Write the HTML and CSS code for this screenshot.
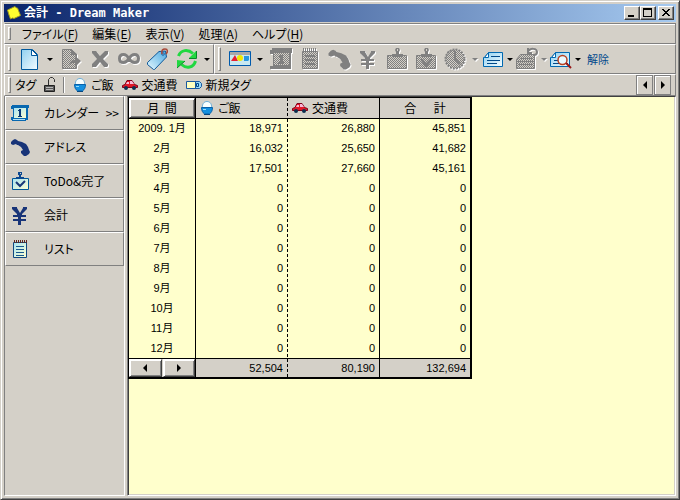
FILE: index.html
```html
<!DOCTYPE html>
<html lang="ja">
<head>
<meta charset="utf-8">
<title>会計 - Dream Maker</title>
<link rel="stylesheet" href="styles.css">
</head>
<body>
<svg class="defs" aria-hidden="true">
  <defs>
    <pattern id="dots" width="2" height="2" patternUnits="userSpaceOnUse">
      <rect width="2" height="2" fill="#d4d0c8"/><rect width="1" height="1" fill="#808080"/><rect x="1" y="1" width="1" height="1" fill="#808080"/>
    </pattern>
    <linearGradient id="sky" x1="0" y1="0" x2="1" y2="1"><stop offset="0" stop-color="#8fd0f0"/><stop offset="1" stop-color="#f4fcff"/></linearGradient>
    <linearGradient id="paper" x1="0" y1="0" x2="1" y2="1"><stop offset="0" stop-color="#a8e4f4"/><stop offset="1" stop-color="#ffffd0"/></linearGradient>
    <linearGradient id="tagfill" x1="1" y1="0" x2="0" y2="1"><stop offset="0" stop-color="#4aa8e0"/><stop offset="1" stop-color="#e4f8ff"/></linearGradient>
    <symbol id="phone" viewBox="0 0 24 24"><path fill="currentColor" d="M3 7l2-2 2-1 2 1 1 1 4 1 4 2 2 3 1 3 1 2-1 2-3 2h-2l-3-3v-2l2-1-2-3-3-2H9L8 9 5 10 3 9z"/></symbol>
    <symbol id="yen" viewBox="0 0 24 24"><path fill="currentColor" d="M4 4h5v1l3 5 3-5V4h4v2l-5 5v1h4v2h-5v2h5v2h-5v4h-3v-4H5v-2h5v-2H5v-2h4v-1L4 6z"/></symbol>
    <symbol id="car" viewBox="0 0 16 16"><path fill="#e01828" stroke="#800018" d="M.5 8.500 3 7.500l2-4h5l2.500 4 3 1v2h-15z"/><path fill="#f8b8d8" d="M5 5h2v2H4zM8 4h2l2 3H8z"/><circle cx="4" cy="11" r="2" fill="#0c3050"/><circle cx="12" cy="11" r="2" fill="#0c3050"/></symbol>
    <symbol id="rice" viewBox="0 0 14 16"><path fill="#f8ffff" stroke="#70b0d8" d="M2.500 7.500C2 4 4 1.500 7 1.500S12 4 11.500 7.500z"/><path fill="#1490e0" stroke="#0860a8" d="M1.500 7.500h11c0 3-1 5-3 6.500h-5c-2-1.500-3-3.500-3-6.500z"/><path fill="#084880" d="M4 14h6v1H4z"/><path fill="#98e0ff" d="M3 9h3v1H3z"/></symbol>
  </defs>
</svg>
<div class="window">
  <header class="titlebar">
    <svg class="logo" viewBox="0 0 16 16" width="16" height="16"><path fill="#ffff30" stroke="#a09820" d="M1.500 5 9 1.500l1.500 1.500h1l3 7.500L8 13.500 6.500 13l-2 1L3 10z"/></svg>
    <h1>会計 - Dream Maker</h1>
    <div class="winbtns">
      <button type="button" aria-label="最小化"><svg viewBox="0 0 12 10" width="12" height="10"><path d="M2 7h6v2H2z"/></svg></button>
      <button type="button" aria-label="最大化"><svg viewBox="0 0 12 10" width="12" height="10"><path fill-rule="evenodd" d="M1 0h9v9H1zM2 2v6h7V2z"/></svg></button>
      <button type="button" class="close" aria-label="閉じる"><svg viewBox="0 0 12 10" width="12" height="10"><path d="M2 1h2v1h1v1h2V2h1V1h2v1H9v1H8v1H7v1h1v1h1v1h1v1H8V7H7V6H5v1H4v1H2V7h1V6h1V5h1V4H4V3H3V2H2z"/></svg></button>
    </div>
  </header>

  <nav class="band menubar">
    <i class="grip"></i>
    <button type="button">ファイル(<u>F</u>)</button>
    <button type="button">編集(<u>E</u>)</button>
    <button type="button">表示(<u>V</u>)</button>
    <button type="button">処理(<u>A</u>)</button>
    <button type="button">ヘルプ(<u>H</u>)</button>
  </nav>

  <div class="bands">
    <div class="band tools first">
      <i class="grip"></i>
      <button type="button" aria-label="新規"><svg class="ic" viewBox="0 0 24 24"><path fill="url(#sky)" stroke="#00589c" d="M3.500 2.500h11l5 5v15h-16z"/><path fill="#fff" stroke="#00589c" d="M13.500 2.500v6h6z"/></svg></button>
      <button type="button" class="drop" aria-label="新規の一覧"></button>
      <button type="button" class="off" disabled aria-label="移動"><svg class="ic" viewBox="0 0 24 24"><path fill="url(#dots)" stroke="#808080" d="M3.500 2.500h9l5 5v14h-14z"/><path fill="#808080" d="M12 2v6h6V7zM10 18c1-4 3-5 6-5V9l6 5-6 6v-4c-3 0-4 0-6 2z"/></svg></button>
      <button type="button" class="off" disabled aria-label="削除"><svg class="ic" viewBox="0 0 24 24"><path fill="#808080" d="M4 4h4l4 5 5-5h3v3l-5 5 5 5v2l-1 1h-3l-4-5-4 5H4v-3l5-5-5-6z"/></svg></button>
      <button type="button" class="off" disabled aria-label="繰り返し"><svg class="ic" viewBox="0 0 24 24"><path fill="none" stroke="#808080" stroke-width="3" d="M12 11.500c-1.500-2.500-3-4-5.500-4s-4 1.500-4 4 1.500 4 4 4 4-1.500 5.500-4 3-4 5.500-4 4 1.500 4 4-1.500 4-4 4-4-1.500-5.500-4z"/></svg></button>
      <button type="button" aria-label="タグ"><svg class="ic" viewBox="0 0 24 24"><path fill="url(#tagfill)" stroke="#105898" d="M1.500 15.500 13 4.500l6.500-.5 1 6L8.500 22.500h-1l-6-5z"/><path fill="#fff" stroke="#105898" d="M16 6h2v2h-2z"/><path fill="none" stroke="#a84838" stroke-width="1.500" d="M16 7c-1-4 1-5 3-5 3 0 3 3 1 5"/></svg></button>
      <button type="button" aria-label="更新"><svg class="ic" viewBox="0 0 24 24"><g fill="none" stroke="#20d840" stroke-width="3"><path d="M3.500 9C6 2.500 13 2 18 6.500"/><path d="M20.500 14c-2 7-9 8-14 3.500"/></g><path fill="#20d840" d="M21 4v7h-7zM2 13v8l8-7z"/><path fill="none" stroke="#088828" d="M21.500 4v7.500H14M2 21l8-7"/></svg></button>
      <button type="button" class="drop" aria-label="更新の一覧"></button>
    </div>
    <div class="band tools second">
      <i class="grip"></i>
      <button type="button" aria-label="画像"><svg class="ic" viewBox="0 0 24 24"><path fill="#c8e8f0" stroke="#005aac" d="M1.500 4.500h21v14h-21z"/><path fill="#a8a8a8" d="M2 5h20v3H2z"/><path fill="#e82030" d="m7 8 3 6H3z"/><circle cx="12" cy="11" r="3" fill="#f0e800"/><path fill="#2898e0" d="M16 9h5v4l-1 1h-4z"/></svg></button>
      <button type="button" class="drop" aria-label="画像の一覧"></button>
      <button type="button" class="off" disabled aria-label="カレンダー"><svg class="ic" viewBox="0 0 24 24"><path fill="#808080" d="M3 1h20v5h-1v16H1v-3h3V7H1V3h2z"/><path fill="url(#dots)" d="M5 6h15v12H5z"/><path fill="#808080" d="M10 8h4v7h1v2H9v-2h2v-5h-1z"/></svg></button>
      <button type="button" class="off" disabled aria-label="リスト"><svg class="ic" viewBox="0 0 24 24"><path fill="url(#dots)" stroke="#808080" d="M4.500 4.500h15v17h-15z"/><path stroke="#808080" stroke-width="2" d="M7 9h10M7 13h10M7 17h10"/><path stroke="#808080" stroke-width="3" stroke-dasharray="1 1" d="M5 2.500h14"/></svg></button>
      <button type="button" class="off" disabled aria-label="アドレス"><svg class="ic big"><use href="#phone"/></svg></button>
      <button type="button" class="off" disabled aria-label="会計"><svg class="ic"><use href="#yen"/></svg></button>
      <button type="button" class="off" disabled aria-label="ToDo"><svg class="ic" viewBox="0 0 24 24"><path fill="url(#dots)" stroke="#808080" d="M2.500 8.500h19v13h-19z"/><path fill="#808080" d="M10 3l1-2h3l1 2-1 2v2h4v3H7V7h4V5z"/><path fill="#d4d0c8" d="M12 2h1v2h-1z"/></svg></button>
      <button type="button" class="off" disabled aria-label="完了"><svg class="ic" viewBox="0 0 24 24"><path fill="url(#dots)" stroke="#808080" d="M2.500 8.500h19v13h-19z"/><path fill="#808080" d="M10 3l1-2h3l1 2-1 2v2h4v3H7V7h4V5zM6 12h3l3 4 4-4h3l-6 8h-2z"/><path fill="#d4d0c8" d="M12 2h1v2h-1z"/></svg></button>
      <button type="button" class="off" disabled aria-label="時刻"><svg class="ic" viewBox="0 0 24 24"><circle cx="12" cy="12" r="9.500" fill="url(#dots)" stroke="#808080" stroke-width="2" stroke-dasharray="2 1"/><path fill="none" stroke="#808080" stroke-width="2" d="M12 4v8l5 5"/></svg></button>
      <button type="button" class="drop off" disabled aria-label="時刻の一覧"></button>
      <button type="button" class="tight" aria-label="表示形式"><svg class="ic" viewBox="0 0 24 24"><path fill="url(#sky)" stroke="#0068b0" d="M7.500 5.500h14v14h-19v-9h1z"/><path fill="#fff" stroke="#0068b0" d="M7.500 5.500v5h-4z"/><path stroke="#004888" d="M10 9.500h9M6 13.500h13M6 16.500h10"/></svg></button>
      <button type="button" class="drop narrow" aria-label="表示形式の一覧"></button>
      <button type="button" class="tight off" disabled aria-label="元に戻す"><svg class="ic" viewBox="0 0 24 24"><path fill="url(#dots)" stroke="#808080" d="M5.500 7.500h14v14h-18v-9z"/><path stroke="#808080" d="M5 11.500h13M3 14.500h15M3 17.500h15"/><path fill="none" stroke="#808080" stroke-width="2" d="M14 4c1-3 8-3 8 1 0 2-1 3-3 3M13 1v5h4"/></svg></button>
      <button type="button" class="drop narrow off" disabled aria-label="元に戻すの一覧"></button>
      <button type="button" class="tight" aria-label="検索"><svg class="ic" viewBox="0 0 24 24"><path fill="url(#sky)" stroke="#0068b0" d="M6.500 5.500h14v14h-19v-9h1z"/><path fill="#fff" stroke="#0068b0" d="M6.500 5.500v5h-4z"/><path stroke="#004888" d="M5 13.500h13M4 16.500h15"/><circle cx="13.500" cy="13" r="4.500" fill="#e8f8ff" stroke="#b84020" stroke-width="1.500"/><path stroke="#981818" stroke-width="2" d="m17 16 5 5"/></svg></button>
      <button type="button" class="drop narrow" aria-label="検索の一覧"></button>
      <button type="button" class="clear">解除</button>
    </div>
  </div>

  <div class="band tagbar">
    <i class="grip"></i>
    <span class="taglabel">タグ</span>
    <button type="button" class="lock" aria-label="ロック"><svg viewBox="0 0 14 18" width="14" height="18"><path fill="none" stroke="#303030" d="M5.500 9V3.500l2-2h2l2 2V6"/><path fill="#585858" stroke="#202020" d="M1.500 9.500h10v6h-10z"/><path stroke="#b8b8b8" d="M3 11.500h7M3 13.500h7"/></svg></button>
    <i class="sep"></i>
    <button type="button" class="tag"><svg width="14" height="16"><use href="#rice"/></svg>ご飯</button>
    <button type="button" class="tag"><svg width="16" height="16"><use href="#car"/></svg>交通費</button>
    <button type="button" class="tag new"><svg viewBox="0 0 16 16" width="16" height="16"><path fill="#ffffc0" stroke="#1858a0" d="M.5 4.500h10v7H.5z"/><path fill="#98d8f8" stroke="#1858a0" d="M9.500 4.500h4l2 2v3l-2 2h-4z"/><path fill="none" stroke="#004888" d="M10.500 6.500h2v3h-2z"/></svg>新規タグ</button>
    <div class="scroll">
      <button type="button" aria-label="前へ"><i class="tri left"></i></button>
      <button type="button" aria-label="次へ"><i class="tri right"></i></button>
    </div>
  </div>

  <main class="main">
    <nav class="side">
      <a href="#calendar"><svg viewBox="0 0 24 24"><path fill="#0868b0" d="M4 4h17v3h-1v12h-2v1H4v-1H3v-3h2V8H3V5h1z"/><path fill="url(#paper)" d="M6 7h12v10H6z"/><path fill="#b0e0f8" d="M5 18h12v1H5z"/><path fill="#083878" d="M11 8h2v7h1v1h-4v-1h1v-5h-1V9h1z"/></svg><span>カレンダー</span><b>&gt;&gt;</b></a>
      <a href="#address"><svg><use href="#phone"/></svg><span>アドレス</span></a>
      <a href="#todo"><svg viewBox="0 0 24 24"><path fill="url(#paper)" stroke="#005898" d="M4.500 9.500h16v11h-16z"/><path fill="#0c4890" d="M8 8h3V6h-1V3h4v3h-1v2h3v2H8z"/><path fill="#d4d0c8" d="M12 4h1v1h-1z"/><path fill="none" stroke="#183878" stroke-width="2" d="m8 13 4 4 5-5"/></svg><span>ToDo&amp;完了</span></a>
      <a href="#account"><svg><use href="#yen"/></svg><span>会計</span></a>
      <a href="#list"><svg viewBox="0 0 24 24"><path fill="url(#paper)" stroke="#104880" d="M5.500 5.500h13v15h-13z"/><path stroke="#185890" d="M8 9.500h8M8 12.500h8M8 15.500h8M8 18.500h8"/><path stroke="#602820" stroke-width="3" stroke-dasharray="1 1" d="M6 4.500h13"/></svg><span>リスト</span></a>
    </nav>
    <section class="view">
      <table>
        <colgroup><col class="c-month"><col class="c-val"><col class="c-val"><col class="c-sum"></colgroup>
        <thead>
          <tr><th><button type="button" class="raised">月&nbsp;&nbsp;間</button></th><th class="cat"><span><svg width="14" height="16"><use href="#rice"/></svg>ご飯</span></th><th class="cat"><span><svg width="16" height="16"><use href="#car"/></svg>交通費</span></th><th class="sum">合　&nbsp;&nbsp;計</th></tr>
        </thead>
        <tbody>
          <tr><th>2009. 1月</th><td>18,971</td><td>26,880</td><td>45,851</td></tr>
          <tr><th>2月</th><td>16,032</td><td>25,650</td><td>41,682</td></tr>
          <tr><th>3月</th><td>17,501</td><td>27,660</td><td>45,161</td></tr>
          <tr><th>4月</th><td>0</td><td>0</td><td>0</td></tr>
          <tr><th>5月</th><td>0</td><td>0</td><td>0</td></tr>
          <tr><th>6月</th><td>0</td><td>0</td><td>0</td></tr>
          <tr><th>7月</th><td>0</td><td>0</td><td>0</td></tr>
          <tr><th>8月</th><td>0</td><td>0</td><td>0</td></tr>
          <tr><th>9月</th><td>0</td><td>0</td><td>0</td></tr>
          <tr><th>10月</th><td>0</td><td>0</td><td>0</td></tr>
          <tr><th>11月</th><td>0</td><td>0</td><td>0</td></tr>
          <tr><th>12月</th><td>0</td><td>0</td><td>0</td></tr>
        </tbody>
        <tfoot>
          <tr><th><div class="pager"><button type="button" class="raised" aria-label="前年"><i class="tri left"></i></button><button type="button" class="raised" aria-label="翌年"><i class="tri right"></i></button></div></th><td>52,504</td><td>80,190</td><td>132,694</td></tr>
        </tfoot>
      </table>
    </section>
  </main>
</div>
</body>
</html>
```
FILE: styles.css
```css
:root {
  --face: #d4d0c8;
  --shade: #808080;
  --dark: #404040;
  --paper: #ffffcc;
}
* { box-sizing: border-box; }
body {
  margin: 0;
  font: 12px/16px "Noto Sans CJK JP", sans-serif;
  font-feature-settings: "palt";
  color: #000;
}
button {
  font: inherit;
  font-feature-settings: inherit;
  color: inherit;
  background: none;
  border: 0;
  padding: 0;
  display: flex;
  align-items: center;
  justify-content: center;
  white-space: nowrap;
}
svg { display: block; flex: none; }
.defs { position: absolute; width: 0; height: 0; }

.window {
  display: flex;
  flex-direction: column;
  min-height: 100vh;
  background: var(--face);
  border: 1px solid;
  border-color: var(--face) var(--dark) var(--dark) var(--face);
  box-shadow: inset 1px 1px #fff, inset -1px -1px var(--shade);
  padding: 3px;
}

.titlebar {
  display: flex;
  align-items: center;
  height: 18px;
  padding: 0 2px;
  background: linear-gradient(to right, #0a246a, #a6caf0);
}
.titlebar h1 {
  flex: 1;
  margin: 0 0 0 2px;
  color: #fff;
  font: bold 12px/16px "DejaVu Sans Mono", "Noto Sans CJK JP", sans-serif;
}
.winbtns { display: flex; }
.winbtns button {
  width: 16px;
  height: 14px;
  background: var(--face);
  border: 1px solid;
  border-color: #fff var(--dark) var(--dark) #fff;
  box-shadow: inset -1px -1px var(--shade);
}
.winbtns .close { margin-left: 2px; }

.band {
  display: flex;
  align-items: center;
  border: 1px solid;
  border-color: #fff var(--shade) var(--shade) #fff;
  padding-left: 3px;
}
.grip {
  width: 3px;
  align-self: stretch;
  margin: 3px 0;
  border: 1px solid;
  border-color: #fff var(--shade) var(--shade) #fff;
}
.menubar {
  height: 21px;
  margin-top: 1px;
  border-top-color: var(--shade);
  box-shadow: inset 0 1px #fff;
}
.menubar button { margin-left: 14px; }
.menubar .grip + button { margin-left: 11px; }
u { text-underline-offset: 2px; }

.bands { display: flex; height: 30px; }
.tools .grip { margin: 2px 0; }
.second { flex: 1; }
.tools button { width: 29px; height: 24px; }
.tools .grip + button { margin-left: 4px; }
.tools .drop { width: 12px; }
.tools .drop::before {
  content: "";
  border: 3px solid transparent;
  border-top-color: currentColor;
  border-bottom: 0;
}
.tools .tight { width: 24px; }
.tools .narrow { width: 10px; }
.tools .clear {
  width: auto;
  margin-left: 4px;
  color: #00488c;
  font-size: 11px;
}
.off { color: var(--shade); filter: drop-shadow(1px 1px 0 #fff); }
.ic { width: 24px; height: 24px; }
.ic.big { width: 28px; height: 28px; }

.tagbar { height: 22px; }
.tagbar .grip { margin: 2px 0; }
.taglabel { margin-left: 4px; width: 24px; }
.lock { width: 22px; }
.sep {
  width: 2px;
  height: 16px;
  margin: 0 8px 0 2px;
  border-left: 1px solid var(--shade);
  border-right: 1px solid #fff;
}
.tag { gap: 4px; margin-right: 8px; }
.scroll {
  display: flex;
  gap: 1px;
  margin: 0 4px 0 auto;
}
.scroll button {
  width: 17px;
  height: 20px;
  border: 1px solid var(--shade);
  box-shadow: inset 1px 1px #fff;
}
.tri { border: 4px solid transparent; }
.tri.left { border-right-color: #000; border-left: 0; }
.tri.right { border-left-color: #000; border-right: 0; }

.main {
  flex: 1;
  display: grid;
  grid-template-columns: 121px 1fr;
  gap: 2px;
}
.side {
  border: 1px solid;
  border-color: var(--shade) #fff #fff var(--shade);
  border-top: 0;
}
.side a {
  display: grid;
  grid-template-columns: 24px 1fr auto;
  column-gap: 12px;
  align-items: center;
  height: 34px;
  padding: 0 4px 0 2px;
  color: #000;
  text-decoration: none;
  white-space: nowrap;
  border: 1px solid;
  border-color: #fff var(--shade) var(--shade) #fff;
}
.side span { min-width: 0; }
.side a b { margin-left: -12px; }
.side svg { width: 24px; height: 24px; color: #183478; }
.side b { font-weight: normal; }

.view {
  background: var(--paper);
  border: 1px solid;
  border-color: var(--dark) #fff #fff var(--shade);
  box-shadow: inset 1px 0 var(--dark), inset -1px -1px var(--face);
}
table {
  table-layout: fixed;
  width: 344px;
  border-collapse: separate;
  border-spacing: 0;
  border: 2px solid #000;
  border-top-width: 1px;
  border-left-width: 1px;
}
.c-month { width: 67px; }
.c-val { width: 92px; }
th, td {
  height: 20px;
  padding: 0 4px;
  font-weight: normal;
  text-align: right;
  border-right: 1px solid #000;
}
td, tbody th {
  font-family: "Liberation Sans", "Noto Sans CJK JP", sans-serif;
  font-size: 11px;
}
tbody td { padding-bottom: 2px; }
td:last-child, th:last-child { border-right: 0; }
thead th {
  height: 21px;
  background: var(--face);
  border-bottom: 1px solid #000;
}
tbody th {
  padding: 0 0 2px;
  text-align: center;
}
tbody tr:last-child > *, tfoot th, tfoot td { height: 19px; }
thead th:first-child, tfoot th { padding: 0; }
.cat span { display: flex; align-items: center; gap: 4px; }
thead .sum { text-align: center; }
tfoot th, tfoot td {
  background: var(--face);
  border-top: 1px solid #000;
}
tr > :nth-child(2) {
  border-right: 0;
  padding-right: 5px;
  background-image: repeating-linear-gradient(#000 0 3px, transparent 3px 5px);
  background-position: right;
  background-size: 1px 100%;
  background-repeat: no-repeat;
}
.raised {
  width: 100%;
  height: 18px;
  border: 1px solid;
  border-color: #fff var(--dark) var(--dark) #fff;
  box-shadow: inset 1px 1px #fff, inset -1px -1px var(--shade);
}
thead .raised { height: 20px; }
.pager { display: flex; gap: 1px; }
```
